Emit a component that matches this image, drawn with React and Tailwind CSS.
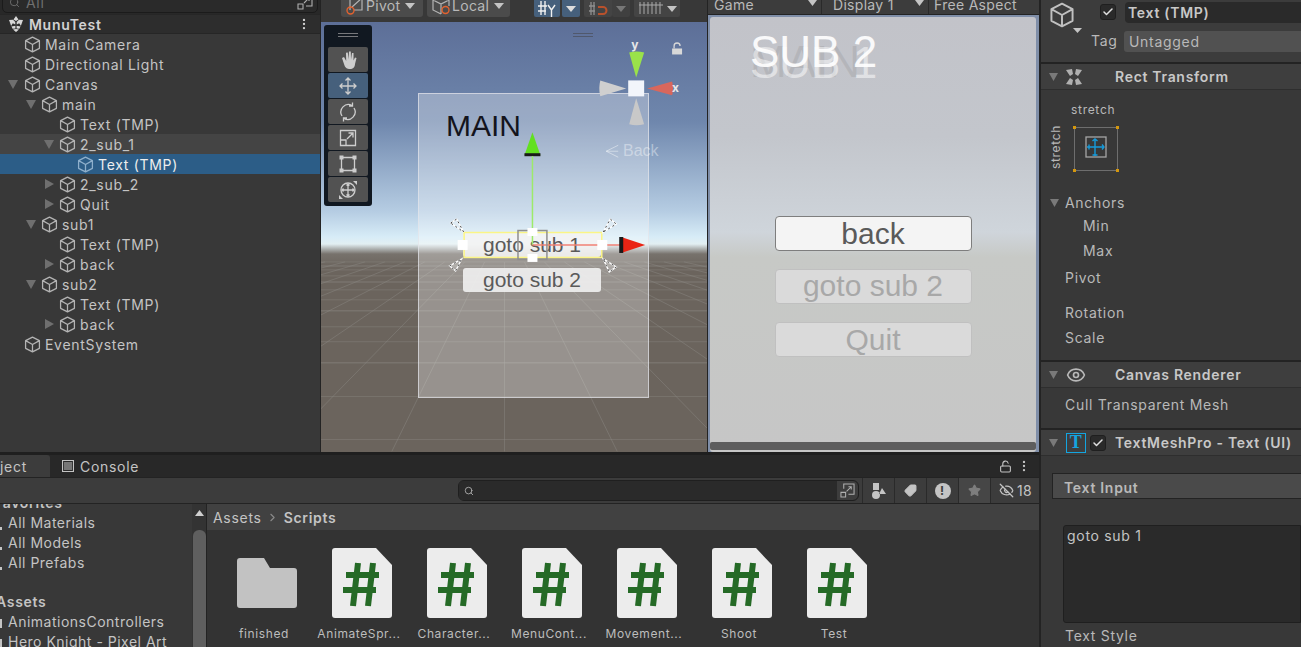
import { Check, MoreVertical, Search, Star, Tag, LockOpen, ChevronRight, Eye, EyeOff } from "lucide-react";

const treeRows = [
  { label: "Main Camera", level: 0 },
  { label: "Directional Light", level: 0 },
  { label: "Canvas", level: 0, arrow: "down" },
  { label: "main", level: 1, arrow: "down" },
  { label: "Text (TMP)", level: 2 },
  { label: "2_sub_1", level: 2, arrow: "down", hover: true },
  { label: "Text (TMP)", level: 3, selected: true },
  { label: "2_sub_2", level: 2, arrow: "right" },
  { label: "Quit", level: 2, arrow: "right" },
  { label: "sub1", level: 1, arrow: "down" },
  { label: "Text (TMP)", level: 2 },
  { label: "back", level: 2, arrow: "right" },
  { label: "sub2", level: 1, arrow: "down" },
  { label: "Text (TMP)", level: 2 },
  { label: "back", level: 2, arrow: "right" },
  { label: "EventSystem", level: 0 },
];

const indentClass = ["pl-[24px]", "pl-[41px]", "pl-[59px]", "pl-[77px]"];
const arrowClass = ["left-[8px]", "left-[26px]", "left-[44px]", "left-[62px]"];

const scripts = ["AnimateSpr...", "Character...", "MenuCont...", "Movement...", "Shoot", "Test"];

const Cube = ({ className = "" }) => (
  <svg viewBox="0 0 16 16" className={className} fill="none" stroke="currentColor" strokeWidth="1.2" strokeLinejoin="round">
    <path d="M8 1 14.500 4.400V11.600L8 15 1.500 11.600V4.400Z M1.500 4.400 8 8 14.500 4.400 M8 8V15" />
  </svg>
);

const ArrowDown = ({ className = "" }) => (
  <svg viewBox="0 0 10 9" preserveAspectRatio="none" className={className} fill="currentColor">
    <path d="M0 0H10L5 9Z" />
  </svg>
);

const ArrowRight = ({ className = "" }) => (
  <svg viewBox="0 0 9 10" className={className} fill="currentColor">
    <path d="M0 0 9 5 0 10Z" />
  </svg>
);

const UnityLogo = () => (
  <svg viewBox="0 0 16 16" className="h-[16px] w-[16px] text-[#d8d8d8]" fill="currentColor">
    <path d="M8 0 10.500 3.600 8 5 5.500 3.600Z M1 4 5 3.800 7.300 6 7.300 8.600 4.800 7.200 3.200 9.800Z M15 4 11 3.800 8.700 6 8.700 8.600 11.200 7.200 12.800 9.800Z M1.200 5.500 3.400 10.400 7.400 9.800 7.400 12.400 4.600 12.800Z M14.800 5.500 12.600 10.400 8.600 9.800 8.600 12.400 11.400 12.800Z M5 13.600 8 12.900 11 13.600 8 16Z" />
  </svg>
);

// two small squares with an arrow, the end of both search fields
const ExpandIcon = ({ className = "" }) => (
  <svg viewBox="0 0 16 16" className={className} fill="none" stroke="#b0b0b0" strokeWidth="1.1">
    <path d="M4 6V1H15V12H9M1 10H6V15H1ZM7 9 12 4M9 4H12V7" />
  </svg>
);

const TreeRow = ({ row }) => (
  <div
    className={`relative flex h-[20px] items-center gap-[4px] ${indentClass[row.level]} ${
      row.selected ? "bg-[#2c5d87] text-[#eeeeee]" : row.hover ? "bg-[#444444]" : ""
    }`}
  >
    {row.arrow === "down" && <ArrowDown className={`absolute top-[6px] h-[9px] w-[10px] text-[#6f6f6f] ${arrowClass[row.level]}`} />}
    {row.arrow === "right" && <ArrowRight className={`absolute top-[5px] h-[10px] w-[9px] text-[#6f6f6f] ${arrowClass[row.level]} ml-[1px]`} />}
    <Cube className={`h-[17px] w-[17px] shrink-0 ${row.selected ? "text-[#8fb0cc]" : "text-[#b4b4b4]"}`} />
    <span>{row.label}</span>
  </div>
);

const Hierarchy = () => (
  <div className="flex h-full w-[320px] shrink-0 flex-col bg-[#383838] text-[14px] tracking-[0.7px] text-[#c4c4c4]">
    <div className="flex h-[14px] items-end overflow-hidden bg-[#282828] px-[3px] pb-[2px]">
      <div className="flex h-[20px] flex-1 items-center justify-between rounded-[4px] bg-[#2a2a2a] pl-[6px] pr-[3px] outline outline-[#1b1b1b]">
        <div className="flex items-center gap-[6px] text-[#6f6f6f]">
          <Search className="h-[11px] w-[11px]" />
          <span>All</span>
        </div>
        <ExpandIcon className="h-[16px] w-[18px]" />
      </div>
    </div>
    <div className="flex h-[20px] items-center justify-between border-y border-y-[#262626] bg-[#2d2d2d] pl-[8px] pr-[9px]">
      <div className="flex items-center gap-[5px] font-semibold text-[#d2d2d2]">
        <UnityLogo />
        <span>MunuTest</span>
      </div>
      <MoreVertical className="h-[14px] w-[14px] text-[#d0d0d0]" />
    </div>
    {treeRows.map((row, idx) => (
      <TreeRow key={idx} row={row} />
    ))}
  </div>
);

const ToolBtn = ({ active, children }) => (
  <div className={`flex h-[25px] w-[40px] items-center justify-center rounded-[2px] ${active ? "bg-[#46607c]" : "bg-[#525252]"} text-[#cdcdcd]`}>
    <svg viewBox="0 0 20 20" className="h-[20px] w-[20px]" fill="none" stroke="currentColor" strokeWidth="1.3">
      {children}
    </svg>
  </div>
);

const SceneTools = () => (
  <div className="absolute left-[3px] top-[3px] flex w-[48px] flex-col gap-px rounded-[3px] bg-[#111821] p-[4px] pt-[22px]">
    <div className="absolute left-[14px] right-[14px] top-[8px] h-[4px] border-y border-y-[#77787c]" />
    <ToolBtn>
      <path fill="currentColor" stroke="none" d="M4 8 6 14C7 18 9 19 12 19 15 19 17 17 17 14L18.500 8 17 7.500 15.500 10.500 15.500 3 14 3 13 9.500 12.800 1.500 11 1.500 10.500 9.500 9.800 2.500 8 2.700 8.200 11 6 7Z" />
    </ToolBtn>
    <ToolBtn active>
      <path d="M10 2V18 M2 10H18 M7.500 4.500 10 2 12.500 4.500 M7.500 15.500 10 18 12.500 15.500 M4.500 7.500 2 10 4.500 12.500 M15.500 7.500 18 10 15.500 12.500" />
    </ToolBtn>
    <ToolBtn>
      <path d="M4 14A7.500 7.500 0 0 1 14 3.500 M16 6A7.500 7.500 0 0 1 6 16.500 M14.500 .5V4H11 M5.500 19.500V16H9" />
    </ToolBtn>
    <ToolBtn>
      <path d="M2.500 2.500H17.500V17.500H2.500Z M2.500 12H8V17.500 M9 11 15 5 M10.500 5H15V9.500" />
    </ToolBtn>
    <ToolBtn>
      <path d="M3.500 3.500H16.500V16.500H3.500Z" />
      <path fill="currentColor" stroke="none" d="M1.500 1.500H5.500V5.500H1.500Z M14.500 1.500H18.500V5.500H14.500Z M1.500 14.500H5.500V18.500H1.500Z M14.500 14.500H18.500V18.500H14.500Z" />
    </ToolBtn>
    <ToolBtn>
      <circle cx="10" cy="10" r="7" />
      <path d="M10 4V16 M4 10H16 M8.500 5.500 10 4 11.500 5.500 M8.500 14.500 10 16 11.500 14.500 M5.500 8.500 4 10 5.500 11.500 M14.500 8.500 16 10 14.500 11.500" />
      <path fill="currentColor" stroke="none" d="M1 19V15L5 19Z M19 1V5L15 1Z" />
    </ToolBtn>
  </div>
);

// grid of the scene floor, all lines run to the vanishing point
const gridDepth = [262, 266, 270, 276, 282, 290, 300, 311, 327, 342, 363, 397, 440];
const gridSpread = [-9, -8, -7, -6, -5, -4, -3, -2, -1, 0, 1, 2, 3, 4, 5, 6, 7, 8, 9];

const SceneGizmos = () => (
  <svg viewBox="321 22 387 430" className="absolute inset-0 h-full w-full">
    {gridDepth.map((y, idx) => (
      <line key={idx} x1="321" x2="708" y1={y} y2={y} stroke="#8a8782" strokeWidth={idx % 3 === 1 ? 1.5 : 1} opacity="0.45" />
    ))}
    {gridSpread.map((k) => (
      <line key={k} x1={505 + k * 20} y1="262" x2={505 + k * 113} y2="452" stroke="#8a8782" strokeWidth="1" opacity="0.5" />
    ))}
  </svg>
);

const SceneHandles = () => (
  <svg viewBox="321 22 387 430" className="absolute inset-0 h-full w-full">
    {/* top right orientation gizmo */}
    <path d="M630 52Q637 50 645 52L637 77Z" fill="#9ae24a" />
    <path d="M601 80Q599 88 601 96L627 88Z" fill="#cfcfcf" />
    <path d="M673 81Q675 88 673 95L648 88Z" fill="#d9675c" />
    <path d="M630 124Q637 126 645 124L637 98Z" fill="#c8c8c8" />
    <rect x="629" y="80" width="16" height="16" fill="#f2f5fb" />
    <text x="632" y="49" fontSize="12" fontWeight="700" fill="#e8e8e8" fontFamily="Inter">y</text>
    <text x="673" y="92" fontSize="12" fontWeight="700" fill="#e8e8e8" fontFamily="Inter">x</text>
    <path d="M675 48V45.500A3 3 0 0 1 681 45.500" fill="none" stroke="#d8d8d8" strokeWidth="1.3" />
    <rect x="673" y="48" width="10" height="6" fill="#d8d8d8" />
    {/* back arrow of the hidden screen */}
    <path d="M619 145 607 151 619 157M607 151H619" fill="none" stroke="#ffffff" strokeOpacity="0.45" />
    {/* move handles */}
    <path d="M533 132 541 155H525Z" fill="#62e020" />
    <rect x="525" y="153" width="16" height="3" fill="#1a1a1a" />
    <line x1="533" y1="156" x2="533" y2="245" stroke="#9dea6a" strokeWidth="1.5" />
    <line x1="533" y1="245" x2="622" y2="245" stroke="#f08074" strokeWidth="1.5" />
    <path d="M646 245 622 237V253Z" fill="#ea2414" />
    <rect x="620" y="237" width="4" height="16" fill="#1a1a1a" />
    {/* rect tool */}
    <rect x="464.500" y="232.500" width="138" height="25" fill="none" stroke="#fbf586" strokeWidth="1.5" />
    <rect x="518.500" y="230.500" width="29" height="29" fill="none" stroke="#8f8f8f" strokeWidth="1.5" />
    <rect x="458" y="240" width="10" height="10" fill="#ffffff" />
    <rect x="598" y="240" width="10" height="10" fill="#ffffff" />
    <rect x="528" y="228" width="10" height="8" fill="#ffffff" />
    <rect x="528" y="254" width="10" height="8" fill="#ffffff" />
    {/* rotate corners, white with a dark dash over it */}
    <g fill="#ffffff" fillOpacity="0.2" stroke="#ffffff" strokeWidth="1.4">
      <path d="M451 223 457 219 464 232Z" />
      <path d="M604 232 611 219 617 224Z" />
      <path d="M450 266 462 259 456 271Z" />
      <path d="M604 259 617 267 610 272Z" />
    </g>
    <g fill="none" stroke="#202020" strokeWidth="0.8" strokeDasharray="2 3">
      <path d="M451 223 457 219 464 232Z" />
      <path d="M604 232 611 219 617 224Z" />
      <path d="M450 266 462 259 456 271Z" />
      <path d="M604 259 617 267 610 272Z" />
    </g>
  </svg>
);

const SceneView = () => (
  <div className="relative flex-1 overflow-hidden bg-[linear-gradient(#5d6f98_0px,#6f87ad_100px,#b6cde3_190px,#d7ecf7_215px,#e2eff2_222px,#77726c_232px,#6b645d_245px,#6b645d_100%)]">
    <SceneGizmos />
    <div className="absolute left-[97px] top-[71px] h-[305px] w-[231px] border-[1.5px] border-[#e2e4ea]/70 bg-white/30 font-['Liberation_Sans',sans-serif]">
      <span className="absolute left-[27px] top-[14px] text-[30px] leading-[36px] text-[#14141c]">MAIN</span>
      <span className="absolute left-[204px] top-[48px] text-[16px] leading-[18px] text-white/40">Back</span>
      <div className="absolute left-[44px] top-[138px] flex h-[25px] w-[138px] items-center justify-center rounded-[3px] bg-[#f3f3f3]/90 text-[21px] text-[#5a5a5a]">goto sub 1</div>
      <div className="absolute left-[44px] top-[174px] flex h-[24px] w-[138px] items-center justify-center rounded-[3px] bg-[#f1f1f1]/90 text-[21px] text-[#5a5a5a]">goto sub 2</div>
    </div>
    <SceneHandles />
    <SceneTools />
    <div className="absolute left-[252px] top-[11px] h-[4px] w-[20px] border-y border-y-[#50586c]" />
  </div>
);

const SceneBar = () => (
  <div className="flex h-[22px] items-start bg-[#383838] pl-[20px] text-[14px] tracking-[0.3px] text-[#b9b9b9]">
    <div className="flex h-[17px] w-[82px] items-center gap-[2px] overflow-hidden rounded-b-[3px] bg-[#4b4b4b] pl-[5px]">
      <svg viewBox="0 0 18 18" className="h-[18px] w-[18px] shrink-0 -mt-[6px]" fill="none" strokeWidth="1.2">
        <path d="M4 13V1H16V13H8M6 10 16 1" stroke="#b4b4b4" />
        <circle cx="4.500" cy="13.500" r="3.500" stroke="#e2622f" strokeWidth="1.4" />
      </svg>
      <span className="-mt-[6px]">Pivot</span>
      <ArrowDown className="ml-[3px] h-[6px] w-[10px] -mt-[6px] text-[#c4c4c4]" />
    </div>
    <div className="ml-[4px] flex h-[17px] w-[83px] items-center gap-[2px] overflow-hidden rounded-b-[3px] bg-[#4b4b4b] pl-[5px]">
      <svg viewBox="0 0 18 18" className="h-[18px] w-[18px] shrink-0 -mt-[6px]" fill="none" strokeWidth="1.2">
        <path d="M1 3 9 0 17 3V9M1 3V13L9 17M1 3 9 7 17 3M9 7V17" stroke="#b4b4b4" />
        <circle cx="13.500" cy="13" r="3.500" stroke="#e2622f" strokeWidth="1.4" />
      </svg>
      <span className="-mt-[6px]">Local</span>
      <ArrowDown className="ml-[3px] h-[6px] w-[10px] -mt-[6px] text-[#c4c4c4]" />
    </div>
    <div className="ml-[24px] flex h-[17px] w-[26px] items-center justify-center rounded-b-[2px] bg-[#46607c]">
      <svg viewBox="0 0 20 16" className="h-[16px] w-[20px]" fill="none" stroke="#f0f0f0" strokeWidth="1.4">
        <path d="M1 5H10M1 10H9M4 0V14M8 0V14M11 4 14.500 9 18 4M14.500 9V16" />
      </svg>
    </div>
    <div className="ml-[2px] flex h-[17px] w-[18px] items-center justify-center rounded-b-[2px] bg-[#46607c]">
      <ArrowDown className="h-[6px] w-[10px] text-[#dddddd]" />
    </div>
    <div className="ml-[4px] flex h-[17px] w-[28px] items-center justify-center rounded-b-[2px] bg-[#444444]">
      <svg viewBox="0 0 20 16" className="h-[16px] w-[20px]" fill="none" strokeWidth="1.3">
        <path d="M1 5H7M1 10H7M3 1V14M6 1V14" stroke="#8f8f8f" />
        <path d="M10 6H15A3 3 0 0 1 15 13H10" stroke="#b9512c" strokeWidth="2" />
      </svg>
    </div>
    <div className="flex h-[17px] w-[18px] items-center justify-center rounded-b-[2px] bg-[#404040]">
      <ArrowDown className="h-[6px] w-[10px] text-[#777777]" />
    </div>
    <div className="ml-[4px] flex h-[17px] w-[46px] items-center justify-center gap-[3px] rounded-b-[2px] bg-[#444444]">
      <svg viewBox="0 0 26 14" className="h-[14px] w-[26px]" fill="none" stroke="#a8a8a8" strokeWidth="1">
        <path d="M1 3H25M2 0V12M6 0V12M10 0V12M14 0V12M18 0V12M22 0V12" />
      </svg>
      <ArrowDown className="h-[6px] w-[10px] text-[#c4c4c4]" />
    </div>
  </div>
);

const GameBar = () => (
  <div className="flex h-[15px] items-end overflow-hidden border-b border-b-[#232323] bg-[#3c3c3c] text-[14px] tracking-[0.3px] text-[#b9b9b9]">
    <div className="relative flex h-[20px] w-[114px] items-center border-r border-r-[#2a2a2a] pl-[6px]">
      <span>Game</span>
      <ArrowDown className="absolute right-[4px] top-[6px] h-[6px] w-[9px] text-[#c4c4c4]" />
    </div>
    <div className="relative flex h-[20px] w-[107px] items-center border-r border-r-[#2a2a2a] pl-[11px]">
      <span>Display 1</span>
      <ArrowDown className="absolute right-[4px] top-[6px] h-[6px] w-[9px] text-[#c4c4c4]" />
    </div>
    <div className="flex h-[20px] items-center whitespace-nowrap pl-[5px]">Free Aspect</div>
  </div>
);

const GameView = () => (
  <div className="relative flex-1 overflow-hidden bg-[#7f8ea8] pl-[2px] pr-[3px] pt-[2px] font-['Liberation_Sans',sans-serif]">
    <div className="relative flex h-full flex-col items-center rounded-[3px] bg-[linear-gradient(#c2c3c9_0px,#c3c6cc_120px,#cfd5db_215px,#c7c9c6_240px,#c6c6c6_100%)] pt-[199px]">
      <span className="absolute left-[40px] top-[21px] text-[44px] leading-[48px] text-[#8a8a8a]/25">MAIN</span>
      <span className="absolute left-[40px] top-[22px] text-[44px] leading-[48px] text-white/50">SUB 1</span>
      <span className="absolute left-[40px] top-[11px] text-[44px] leading-[48px] text-white/90">SUB 2</span>
      <div className="flex h-[35px] w-[197px] items-center justify-center rounded-[4px] border border-[#7e7e7e] bg-[#f4f4f4] text-[30px] text-[#5a5a5a]">back</div>
      <div className="mt-[18px] flex h-[35px] w-[197px] items-center justify-center rounded-[4px] border border-[#c0c0c0] bg-[#dadada] pb-[3px] text-[30px] text-[#a8a8a8]">goto sub 2</div>
      <div className="mt-[18px] flex h-[35px] w-[197px] items-center justify-center rounded-[4px] border border-[#c0c0c0] bg-[#dadada] pb-[1px] text-[30px] text-[#a8a8a8]">Quit</div>
      <div className="absolute inset-x-0 bottom-[2px] h-[8px] rounded-[2px] bg-[#5d5d5d]" />
    </div>
  </div>
);

const FileIcon = () => (
  <svg viewBox="0 0 60 70" className="h-[70px] w-[60px]">
    <path d="M3 0H44L60 17V67Q60 70 57 70H3Q0 70 0 67V3Q0 0 3 0Z" fill="#ececec" />
    <path d="M26 15 21 58M41 15 36 58M14 27H47M11 42H44" stroke="#256a26" strokeWidth="6" fill="none" />
  </svg>
);

const FolderIcon = () => (
  <svg viewBox="0 0 60 50" className="h-[50px] w-[60px]">
    <path d="M3 0H27L33 10H57Q60 10 60 13V47Q60 50 57 50H3Q0 50 0 47V3Q0 0 3 0Z" fill="#c2c2c2" />
  </svg>
);

const GridItem = ({ label, children }) => (
  <div className="flex w-[95px] flex-col items-center">
    <div className="flex h-[70px] items-center">{children}</div>
    <span className="mr-[5px] mt-[8px] whitespace-nowrap text-[12px] leading-[15px] tracking-[0.6px] text-[#bdbdbd]">{label}</span>
  </div>
);

const ProjectToolIcon = ({ children, className = "w-[32px]" }) => (
  <div className={`flex h-full items-center justify-center border-l border-l-[#2a2a2a] text-[#c4c4c4] ${className}`}>{children}</div>
);

const SideRow = ({ label, mark }) => (
  <div className="relative h-[20px] whitespace-nowrap leading-[20px] tracking-[0.5px]">
    {label}
    <span className={`absolute -left-[8px] bg-[#c4c4c4] ${mark}`} />
  </div>
);

const ProjectPanel = () => (
  <div className="flex min-h-0 flex-1 flex-col overflow-hidden border-t-[3px] border-t-[#1f1f1f] text-[14px] tracking-[0.7px] text-[#c4c4c4]">
    <div className="flex h-[23px] items-center border-b border-b-[#232323] bg-[#282828]">
      <div className="flex h-full w-[50px] items-center overflow-hidden rounded-tr-[3px] bg-[#3c3c3c]">
        <span>ject</span>
      </div>
      <div className="ml-[12px] flex items-center gap-[6px]">
        <svg viewBox="0 0 12 12" className="h-[12px] w-[12px]" fill="none" stroke="#c4c4c4" strokeWidth="1.2">
          <path d="M.5.5H11.500V11.500H.5ZM2 3H10M2 5H10M2 7H10M2 9H10" />
        </svg>
        <span>Console</span>
      </div>
      <div className="ml-auto flex items-center gap-[5px] pr-[8px] text-[#c4c4c4]">
        <LockOpen className="h-[13px] w-[13px]" />
        <MoreVertical className="h-[14px] w-[14px]" />
      </div>
    </div>
    <div className="flex h-[26px] items-center justify-end border-b border-b-[#232323] bg-[#3c3c3c]">
      <div className="mr-[4px] flex h-[19px] w-[399px] items-center justify-between rounded-[5px] bg-[#2a2a2a] pl-[5px] outline outline-[#1f1f1f]">
        <Search className="h-[10px] w-[10px] text-[#b5b5b5]" />
        <div className="flex h-full w-[21px] items-center justify-center rounded-r-[5px] bg-[#3d3d3d]">
          <ExpandIcon className="h-[15px] w-[15px]" />
        </div>
      </div>
      <ProjectToolIcon>
        <svg viewBox="0 0 14 16" className="h-[16px] w-[14px]" fill="#c4c4c4"><path d="M1 0H7V7H1ZM0 12A4 4 0 1 0 8 12A4 4 0 1 0 0 12ZM10 5 14 11H7Z" /></svg>
      </ProjectToolIcon>
      <ProjectToolIcon>
        <Tag className="h-[13px] w-[13px] rotate-90" fill="#c4c4c4" />
      </ProjectToolIcon>
      <ProjectToolIcon>
        <div className="flex h-[16px] w-[16px] items-center justify-center rounded-full bg-[#c4c4c4] text-[12px] font-bold text-[#3c3c3c]">!</div>
      </ProjectToolIcon>
      <ProjectToolIcon className="w-[32px] bg-[#464646]">
        <Star className="h-[13px] w-[13px] text-[#7e7e7e]" fill="#7e7e7e" />
      </ProjectToolIcon>
      <ProjectToolIcon className="w-[49px] gap-[2px] tracking-[0.3px]">
        <EyeOff className="h-[15px] w-[17px]" />
        <span>18</span>
      </ProjectToolIcon>
    </div>
    <div className="flex min-h-0 flex-1">
      <div className="relative w-[207px] shrink-0 overflow-hidden border-r border-r-[#232323] bg-[#383838]">
        <div className="-mt-[11px] pl-[8px]">
          <div className="-ml-[14px] h-[20px] font-semibold leading-[20px]">Favorites</div>
          {["All Materials", "All Models", "All Prefabs"].map((t) => (
            <SideRow key={t} label={t} mark="bottom-[3px] h-[3px] w-[2px]" />
          ))}
          <div className="-ml-[12px] mt-[19px] h-[20px] font-semibold leading-[20px]">Assets</div>
          {["AnimationsControllers", "Hero Knight - Pixel Art"].map((t) => (
            <SideRow key={t} label={t} mark="bottom-[4px] h-[9px] w-[2px]" />
          ))}
        </div>
        <div className="absolute bottom-0 right-0 top-0 flex w-[14px] flex-col items-center bg-[#333333] pt-[6px]">
          <ArrowDown className="h-[6px] w-[9px] rotate-180 text-[#cfcfcf]" />
          <div className="mt-[14px] w-[13px] flex-1 rounded-t-[6px] bg-[#5f5f5f]" />
        </div>
      </div>
      <div className="flex min-w-0 flex-1 flex-col bg-[#333333]">
        <div className="flex h-[26px] shrink-0 items-center gap-[4px] bg-[#414141] pl-[6px]">
          <span>Assets</span>
          <ChevronRight className="h-[13px] w-[13px] text-[#8a8a8a]" />
          <span className="ml-[1px] font-semibold">Scripts</span>
        </div>
        <div className="flex pl-[12px] pt-[18px]">
          <GridItem label="finished"><FolderIcon /></GridItem>
          {scripts.map((s) => (
            <GridItem key={s} label={s}><FileIcon /></GridItem>
          ))}
        </div>
      </div>
    </div>
  </div>
);

const CompHeader = ({ icon, check, label }) => (
  <div className="flex h-[26px] items-center border-b border-b-[#2e2e2e] bg-[#3e3e3e] pl-[8px]">
    <ArrowDown className="h-[8px] w-[9px] shrink-0 text-[#7a7a7a]" />
    <div className="ml-[8px] flex w-[42px] shrink-0 items-center gap-[5px]">
      {icon}
      {check}
    </div>
    <span className="ml-[7px] whitespace-nowrap font-semibold text-[#c8c8c8]">{label}</span>
  </div>
);

const Checkbox = ({ className = "" }) => (
  <div className={`flex h-[16px] w-[16px] shrink-0 items-center justify-center rounded-[3px] border border-[#1f1f1f] bg-[#2a2a2a] ${className}`}>
    <Check className="h-[12px] w-[12px] text-[#e0e0e0]" strokeWidth={3} />
  </div>
);

const PropRow = ({ label, className = "" }) => (
  <div className={`flex items-center ${className}`}>{label}</div>
);

const Inspector = () => (
  <div className="h-full w-[262px] shrink-0 overflow-hidden border-l-2 border-l-[#232323] bg-[#383838] text-[14px] tracking-[0.7px] text-[#b9b9b9]">
    <div className="relative h-[64px] border-b-2 border-b-[#232323] bg-[#3c3c3c]">
      <Cube className="absolute left-[8px] top-[1px] h-[28px] w-[26px] text-[#c0c0c0]" />
      <ArrowDown className="absolute left-[32px] top-[28px] h-[5px] w-[9px] text-[#c4c4c4]" />
      <Checkbox className="absolute left-[59px] top-[4px]" />
      <div className="absolute left-[84px] right-0 top-[2px] flex h-[21px] items-center rounded-l-[4px] bg-[#2a2a2a] pl-[3px] font-semibold text-[#c8c8c8]">Text (TMP)</div>
      <span className="absolute left-[50px] top-[30px]">Tag</span>
      <div className="absolute left-[83px] right-0 top-[31px] flex h-[21px] items-center rounded-l-[3px] bg-[#515151] pb-[1px] pl-[5px]">Untagged</div>
    </div>
    <CompHeader
      label="Rect Transform"
      icon={
        <svg viewBox="0 0 16 16" className="h-[16px] w-[16px]" fill="#b0b0b0">
          <path d="M0 1 6 0 7 5 4 7ZM16 1 10 0 9 5 12 7ZM0 15 6 16 7 11 4 9ZM16 15 10 16 9 11 12 9Z" />
        </svg>
      }
    />
    <div className="relative h-[272px] border-b-2 border-b-[#232323]">
      <span className="absolute left-[30px] top-[12px] text-[12px] leading-[16px]">stretch</span>
      <span className="absolute left-[-7px] top-[49px] -rotate-90 text-[12px] leading-[16px]">stretch</span>
      <svg viewBox="0 0 46 46" className="absolute left-[32px] top-[36px] h-[46px] w-[46px]" fill="none">
        <rect x="1.500" y="1.500" width="43" height="43" stroke="#6e6e6e" strokeWidth="1" />
        <path d="M0 0H3V3H0ZM43 0H46V3H43ZM0 43H3V46H0ZM43 43H46V46H43Z" fill="#d4970e" />
        <rect x="13" y="11" width="20" height="20" stroke="#a5a5a5" strokeWidth="1.3" />
        <path d="M22 13V30M14 21H31M19.500 15 22 13 24.500 15M19.500 29H24.500M16 18.500V23.500M29 18.500 31 21 29 23.500" stroke="#159bdb" strokeWidth="1.4" />
      </svg>
      <div className="absolute left-[9px] top-[102px] flex items-center gap-[6px]">
        <ArrowDown className="h-[8px] w-[9px] text-[#7a7a7a]" />
        <span className="text-[#b9b9b9]">Anchors</span>
      </div>
      <PropRow label="Min" className="absolute left-[42px] top-[125px]" />
      <PropRow label="Max" className="absolute left-[42px] top-[150px]" />
      <PropRow label="Pivot" className="absolute left-[24px] top-[177px]" />
      <PropRow label="Rotation" className="absolute left-[24px] top-[212px]" />
      <PropRow label="Scale" className="absolute left-[24px] top-[237px]" />
    </div>
    <CompHeader
      label="Canvas Renderer"
      icon={<Eye className="h-[20px] w-[20px] text-[#b9b9b9]" />}
    />
    <div className="h-[42px] border-b-2 border-b-[#232323] pl-[24px] pt-[6px]">Cull Transparent Mesh</div>
    <CompHeader
      label="TextMeshPro - Text (UI)"
      icon={
        <div className="flex h-[20px] w-[20px] shrink-0 items-center justify-center border border-[#13a5e0] font-['Liberation_Serif',serif] text-[18px] font-bold text-[#13a5e0]">T</div>
      }
      check={<Checkbox className="-ml-[1px]" />}
    />
    <div className="ml-[11px] mt-[17px] flex h-[26px] items-center border-y border-y-[#232323] border-l border-l-[#232323] bg-[#4a4a4a] pl-[11px] pt-[3px] font-semibold">Text Input</div>
    <div className="ml-[22px] mt-[26px] h-[98px] rounded-l-[3px] border border-[#1f1f1f] bg-[#2a2a2a] pl-[3px] leading-[19px] text-[#c4c4c4]">goto sub 1</div>
    <div className="pl-[24px] pt-[2px]">Text Style</div>
  </div>
);

export default function App() {
  return (
    <div className="flex h-[647px] w-[1301px] overflow-hidden bg-[#232323] font-['Inter',sans-serif]">
      <div className="flex h-full w-[1039px] shrink-0 flex-col">
        <div className="flex h-[452px] shrink-0 gap-px">
          <Hierarchy />
          <div className="flex w-[386px] shrink-0 flex-col">
            <SceneBar />
            <SceneView />
          </div>
          <div className="flex min-w-0 flex-1 flex-col">
            <GameBar />
            <GameView />
          </div>
        </div>
        <ProjectPanel />
      </div>
      <Inspector />
    </div>
  );
}
